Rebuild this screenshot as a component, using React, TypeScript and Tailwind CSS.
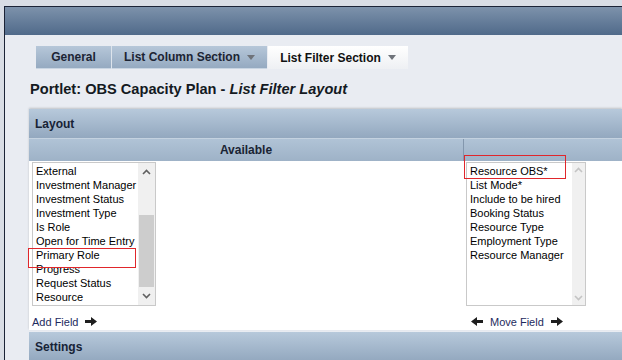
import React from "react";

const leftItems = [
  "External",
  "Investment Manager",
  "Investment Status",
  "Investment Type",
  "Is Role",
  "Open for Time Entry",
  "Primary Role",
  "Progress",
  "Request Status",
  "Resource",
];

const rightItems = [
  "Resource OBS*",
  "List Mode*",
  "Include to be hired",
  "Booking Status",
  "Resource Type",
  "Employment Type",
  "Resource Manager",
];

function Chevron({ up, color }: { up?: boolean; color: string }) {
  return (
    <svg width="9" height="6" viewBox="0 0 9 6">
      <polyline
        points={up ? "1,5 4.5,1.5 8,5" : "1,1 4.5,4.5 8,1"}
        fill="none"
        stroke={color}
        strokeWidth="1.6"
      />
    </svg>
  );
}

function Arrow({ left }: { left?: boolean }) {
  return (
    <svg width="12" height="9" viewBox="0 0 12 9" style={left ? { transform: "scaleX(-1)" } : undefined}>
      <path d="M0 3 H6 V0 L12 4.5 L6 9 V6 H0 Z" fill="#1e1e1e" />
    </svg>
  );
}

function Caret() {
  return (
    <svg width="8" height="5" viewBox="0 0 8 5" className="ml-[7px]">
      <path d="M0 0 H8 L4 5 Z" fill="#6f737a" />
    </svg>
  );
}

export default function App() {
  return (
    <div
      className="w-[622px] h-[360px] overflow-hidden bg-[#d9dde5] pt-[6px] pl-[4px] relative"
      style={{ fontFamily: '"Liberation Sans", Arial, sans-serif' }}
    >
      <div className="h-full border-l border-t border-[#1b2336] bg-[#e9ecf2] flex flex-col">
        {/* top header bar */}
        <div className="h-[28px] bg-gradient-to-b from-[#7d92ab] to-[#506a8a] shrink-0" />

        {/* tabs */}
        <div className="flex pl-[31px] mt-[11px] h-[23px] shrink-0">
          <div className="w-[75px] h-full flex items-center justify-center bg-gradient-to-b from-[#b6c7d9] to-[#95aac1] border-b border-[#c9d5e2] text-[12px] font-bold text-[#1c2433]">
            General
          </div>
          <div className="w-[1px] h-full bg-[#dde4ec]" />
          <div className="w-[155px] h-full flex items-center justify-center bg-gradient-to-b from-[#b6c7d9] to-[#95aac1] border-b border-[#c9d5e2] text-[12px] font-bold text-[#1c2433]">
            List Column Section
            <Caret />
          </div>
          <div className="w-[1px] h-full bg-[#e9ecf2]" />
          <div className="w-[140px] h-full flex items-center justify-center bg-gradient-to-b from-[#ffffff] to-[#eef0f3] text-[12px] font-bold text-[#111]">
            List Filter Section
            <Caret />
          </div>
        </div>

        {/* title */}
        <div className="pl-[25px] mt-[12px] h-[17px] leading-[17px] text-[14.6px] font-bold text-[#141a22] shrink-0">
          Portlet: OBS Capacity Plan - <span className="italic">List Filter Layout</span>
        </div>

        {/* Layout panel */}
        <div className="ml-[24px] mt-[11px] shadow-[0_-1px_2px_rgba(0,0,0,0.18)] shrink-0">
          <div className="h-[29px] bg-gradient-to-b from-[#b7c9db] to-[#93a8bf] flex items-center pl-[6px] text-[12px] font-bold text-[#172336]">
            Layout
          </div>
          <div className="h-[23px] flex border-t border-[#c4d2e0] bg-gradient-to-b from-[#b0c3d6] to-[#9eb2c7]">
            <div className="w-[434px] flex items-center justify-center text-[12px] font-bold text-[#1a2434]">
              Available
            </div>
            <div className="w-[1px] bg-[#8397ad]" />
            <div className="flex-1" />
          </div>
          <div className="bg-white h-[169px] flex">
            {/* left column */}
            <div className="w-[434px] pl-[3px] pt-[1px] flex flex-col">
              <div className="w-[124px] h-[144px] border border-[#c9c9c9] flex">
                <div className="flex-1 pl-[3px] pt-[1px] text-[11px] leading-[14px] text-black">
                  {leftItems.map((t) => (
                    <div key={t} className="whitespace-nowrap">{t}</div>
                  ))}
                </div>
                <div className="w-[17px] bg-[#f0f0f0] flex flex-col">
                  <div className="h-[17px] flex items-center justify-center">
                    <Chevron up color="#606060" />
                  </div>
                  <div className="h-[35px]" />
                  <div className="h-[72px] bg-[#cdcdcd] mx-[1px]" />
                  <div className="flex-1 flex items-center justify-center">
                    <Chevron color="#606060" />
                  </div>
                </div>
              </div>
              <div className="mt-[8px] flex items-center text-[11px] text-[#1d2a5e]">
                <span>Add Field</span>
                <span className="ml-[7px] flex"><Arrow /></span>
              </div>
            </div>
            <div className="w-[1px]" />
            {/* right column */}
            <div className="flex-1 pl-[2px] pt-[1px] flex flex-col">
              <div className="w-[120px] h-[144px] border border-[#c9c9c9] flex">
                <div className="flex-1 pl-[3px] pt-[1px] text-[11px] leading-[14px] text-black">
                  {rightItems.map((t) => (
                    <div key={t} className="whitespace-nowrap">{t}</div>
                  ))}
                </div>
                <div className="w-[13px] bg-[#f0f0f0] flex flex-col justify-between py-[4px]">
                  <div className="flex justify-center"><Chevron up color="#c4c4c4" /></div>
                  <div className="flex justify-center"><Chevron color="#c4c4c4" /></div>
                </div>
              </div>
              <div className="mt-[8px] flex items-center text-[11px] text-[#1d2a5e] pl-[5px]">
                <span className="flex"><Arrow left /></span>
                <span className="ml-[7px]">Move Field</span>
                <span className="ml-[7px] flex"><Arrow /></span>
              </div>
            </div>
          </div>
        </div>

        {/* Settings panel */}
        <div className="ml-[24px] mt-[2px] h-[29px] bg-gradient-to-b from-[#b7c9db] to-[#93a8bf] flex items-center pl-[6px] text-[12px] font-bold text-[#172336] shrink-0">
          Settings
        </div>
      </div>

      {/* annotation boxes */}
      <div className="absolute left-[28px] top-[248px] w-[108px] h-[20px] border border-[#e0262b]" />
      <div className="absolute left-[464px] top-[155px] w-[102px] h-[24px] border border-[#e0262b]" />
    </div>
  );
}
